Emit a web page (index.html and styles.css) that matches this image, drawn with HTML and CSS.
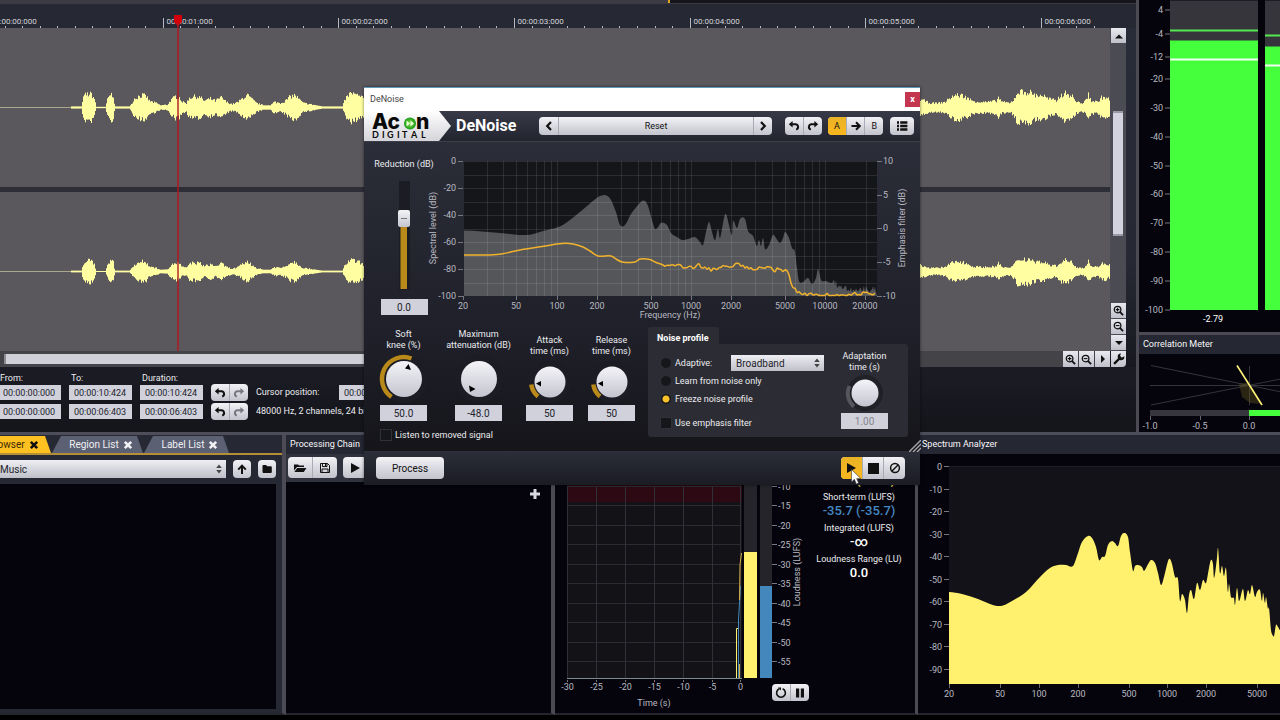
FILE: index.html
```html
<!DOCTYPE html>
<html lang="en">
<head>
<meta charset="utf-8">
<title>Audio Editor</title>
<link rel="stylesheet" href="styles.css">
</head>
<body>
<svg class="defs" aria-hidden="true">
  <symbol id="undo" viewBox="0 0 12 12"><path d="M3 4.2H6.8A2.8 2.8 0 0 1 8.2 9.6" fill="none" stroke="currentColor" stroke-width="2"/><path d="M.8 4.2 4.6 1V7.4Z"/></symbol>
  <symbol id="redo" viewBox="0 0 12 12"><path d="M9 4.2H5.2A2.8 2.8 0 0 0 3.8 9.6" fill="none" stroke="currentColor" stroke-width="2"/><path d="M11.2 4.2 7.4 1V7.4Z"/></symbol>
  <symbol id="zoomin" viewBox="0 0 12 12"><circle cx="5" cy="5" r="3.6" fill="none" stroke="currentColor" stroke-width="1.4"/><path d="M7.8 7.8 11 11" stroke="currentColor" stroke-width="2"/><path d="M3 5H7M5 3V7" stroke="currentColor" stroke-width="1.2"/></symbol>
  <symbol id="zoomout" viewBox="0 0 12 12"><circle cx="5" cy="5" r="3.6" fill="none" stroke="currentColor" stroke-width="1.4"/><path d="M7.8 7.8 11 11" stroke="currentColor" stroke-width="2"/><path d="M3 5H7" stroke="currentColor" stroke-width="1.2"/></symbol>
  <symbol id="up" viewBox="0 0 12 12"><path d="M2 8.5 6 4.5 10 8.5Z"/></symbol>
  <symbol id="down" viewBox="0 0 12 12"><path d="M2 4 6 8 10 4Z"/></symbol>
  <symbol id="right" viewBox="0 0 12 12"><path d="M4 2V10L8 6Z"/></symbol>
  <symbol id="play" viewBox="0 0 12 12"><path d="M2 1V11L11 6Z"/></symbol>
  <symbol id="wrench" viewBox="0 0 12 12"><path d="M1.8 10.2 7 5" stroke="currentColor" stroke-width="2.4" stroke-linecap="round"/><path d="M11.2 3.2A3.3 3.3 0 1 1 8 .6L7 2.8 8.8 4.8Z"/></symbol>
  <symbol id="close" viewBox="0 0 10 10"><path d="M1.8 1.8 8.2 8.2M8.2 1.8 1.8 8.2" stroke="currentColor" stroke-width="2.6"/></symbol>
  <symbol id="arrowup" viewBox="0 0 12 12"><path d="M6 11V3M2.2 6.6 6 2.6 9.8 6.6" fill="none" stroke="currentColor" stroke-width="2"/></symbol>
  <symbol id="arrowright" viewBox="0 0 12 12"><path d="M1.5 6H9M6 2.2 9.8 6 6 9.8" fill="none" stroke="currentColor" stroke-width="2"/></symbol>
  <symbol id="folder" viewBox="0 0 12 12"><path d="M1.5 3A1 1 0 0 1 2.5 2H5L6.2 3.2H9.8A1 1 0 0 1 10.8 4.2V9A1 1 0 0 1 9.8 10H2.5A1 1 0 0 1 1.5 9Z"/></symbol>
  <symbol id="open" viewBox="0 0 14 12"><path d="M1 8.6V2.4H5L6.2 3.6H11V5H4Z"/><path d="M1.4 10 4.2 6H13.4L10.8 10Z"/></symbol>
  <symbol id="save" viewBox="0 0 12 12"><path d="M1.5 1.5H8.5L10.5 3.5V10.5H1.5Z" fill="none" stroke="currentColor"/><path d="M3.5 1.5V4.5H8V1.5M3 10.5V7H9V10.5" fill="none" stroke="currentColor"/><path d="M6 2H7.2V4H6Z"/></symbol>
  <symbol id="prev" viewBox="0 0 12 12"><path d="M8 2 4.2 6 8 10" fill="none" stroke="currentColor" stroke-width="2.2"/></symbol>
  <symbol id="next" viewBox="0 0 12 12"><path d="M4 2 7.8 6 4 10" fill="none" stroke="currentColor" stroke-width="2.2"/></symbol>
  <symbol id="list" viewBox="0 0 12 12"><path d="M1 2.5H3M4.2 2.5H11.4M1 6H3M4.2 6H11.4M1 9.5H3M4.2 9.5H11.4" stroke="currentColor" stroke-width="2.4"/></symbol>
  <symbol id="stop" viewBox="0 0 12 12"><path d="M0 0H12V12H0Z"/></symbol>
  <symbol id="bypass" viewBox="0 0 12 12"><circle cx="6" cy="6" r="4.4" fill="none" stroke="currentColor" stroke-width="1.5"/><path d="M3 9 9 3" stroke="currentColor" stroke-width="1.5"/></symbol>
  <symbol id="loop" viewBox="0 0 12 12"><path d="M4.4 1.8A4.4 4.4 0 1 0 7.6 1.8" fill="none" stroke="currentColor" stroke-width="1.6"/><path d="M3 .4H6V3.4Z"/></symbol>
  <symbol id="pause" viewBox="0 0 12 12"><path d="M2 1.5H5.2V10.5H2ZM6.8 1.5H10V10.5H6.8Z"/></symbol>
  <symbol id="spin" viewBox="0 0 8 12"><path d="M1.2 5 4 1.6 6.8 5ZM1.2 7 4 10.4 6.8 7Z"/></symbol>
</svg>

<div class="app">
  <div class="upper">
    <main class="editor">
      <div class="strip"><span class="strip-left"></span></div>
      <svg class="ruler" id="ruler" height="24"></svg>
      <div class="tracks">
        <div class="lanes">
          <svg class="lane" id="lane1" viewBox="0 28 1110 159" preserveAspectRatio="none"></svg>
          <svg class="lane" id="lane2" viewBox="0 28 1110 159" preserveAspectRatio="none"></svg>
          <svg class="playhead" width="10" height="336" viewBox="0 0 10 336" aria-hidden="true"><path d="M1 0H9V7L5 11 1 7Z" fill="#d3000c"/><path d="M5 8V336" stroke="#b4161f" stroke-width="1.4"/></svg>
        </div>
        <div class="vscroll">
          <button class="sq" aria-label="Scroll up"><svg class="i12"><use href="#up"/></svg></button>
          <div class="vtrack"><span class="vthumb"></span></div>
          <button class="sq" aria-label="Zoom in vertically"><svg class="i11"><use href="#zoomin"/></svg></button>
          <button class="sq" aria-label="Zoom out vertically"><svg class="i11"><use href="#zoomout"/></svg></button>
          <button class="sq" aria-label="Scroll down"><svg class="i12"><use href="#down"/></svg></button>
        </div>
        <div class="hscroll">
          <span class="hthumb"></span>
          <button class="sq" aria-label="Zoom in"><svg class="i11"><use href="#zoomin"/></svg></button>
          <button class="sq" aria-label="Zoom out"><svg class="i11"><use href="#zoomout"/></svg></button>
          <button class="sq" aria-label="Scroll right"><svg class="i12"><use href="#right"/></svg></button>
        </div>
        <button class="sq corner" aria-label="Settings"><svg class="i12"><use href="#wrench"/></svg></button>
      </div>
      <div class="transport">
        <label for="from1">From:</label><label for="to1">To:</label><label for="dur1">Duration:</label><span></span><span></span><span></span>
        <input class="field time" id="from1" value="00:00:00:000">
        <input class="field time" id="to1" value="00:00:10:424">
        <input class="field time" id="dur1" value="00:00:10:424">
        <div class="group small"><button aria-label="Undo"><svg class="i12"><use href="#undo"/></svg></button><button class="dim" aria-label="Redo"><svg class="i12"><use href="#redo"/></svg></button></div>
        <label for="cursor">Cursor position:</label>
        <input class="field time" id="cursor" value="00:00:01:084">
        <input class="field time" aria-label="View from" value="00:00:00:000">
        <input class="field time" aria-label="View to" value="00:00:06:403">
        <input class="field time" aria-label="View duration" value="00:00:06:403">
        <div class="group small"><button aria-label="Undo view"><svg class="i12"><use href="#undo"/></svg></button><button class="dim" aria-label="Redo view"><svg class="i12"><use href="#redo"/></svg></button></div>
        <span class="format">48000 Hz, 2 channels, 24 bits</span>
      </div>
    </main>
    <aside class="side">
      <svg class="level" id="level" width="141" height="331" viewBox="1139 0 141 331"></svg>
      <h2 class="head side-head">Correlation Meter</h2>
      <svg class="corr" id="corr" width="141" height="78" viewBox="1139 353 141 78"></svg>
    </aside>
  </div>

  <div class="lower">
    <section class="panel browser">
      <div class="tabs">
        <button class="tab active">Browser<svg class="i10"><use href="#close"/></svg></button>
        <button class="tab region">Region List<svg class="i10"><use href="#close"/></svg></button>
        <button class="tab labels">Label List<svg class="i10"><use href="#close"/></svg></button>
      </div>
      <div class="path">
        <span class="pick grow"><select aria-label="Folder"><option>Music</option></select><svg class="spin"><use href="#spin"/></svg></span>
        <button class="btn icon" aria-label="Parent folder"><svg class="i12"><use href="#arrowup"/></svg></button>
        <button class="btn icon" aria-label="Choose folder"><svg class="i12"><use href="#folder"/></svg></button>
      </div>
      <div class="files"></div>
    </section>
    <section class="panel chain">
      <h2 class="head">Processing Chain</h2>
      <div class="tools">
        <div class="group wide"><button aria-label="Open"><svg class="i14"><use href="#open"/></svg></button><button aria-label="Save"><svg class="i12"><use href="#save"/></svg></button></div>
        <button class="btn icon wide-icon" aria-label="Play chain"><svg class="i12"><use href="#play"/></svg></button>
      </div>
      <div class="slots"><button class="add" aria-label="Add processor"><svg width="10" height="10" viewBox="0 0 10 10"><path d="M5 0V10M0 5H10" stroke="#d9d9e0" stroke-width="3"/></svg></button></div>
    </section>
    <section class="panel loudness">
      <div class="loud-chart">
        <svg id="loud" width="250" height="225" viewBox="555 455 250 225"></svg>
        <div class="loud-foot">
          <svg id="loudaxis" width="217" height="33" viewBox="555 680 217 33"></svg>
          <div class="group small"><button aria-label="Reset meter"><svg class="i12"><use href="#loop"/></svg></button><button aria-label="Pause meter"><svg class="i12"><use href="#pause"/></svg></button></div>
        </div>
      </div>
      <dl class="readouts">
        <dt>Momentary (LUFS)</dt><dd class="yellow">-26.9 (-26.9)</dd>
        <dt>Short-term (LUFS)</dt><dd class="blue">-35.7 (-35.7)</dd>
        <dt>Integrated (LUFS)</dt><dd>-∞</dd>
        <dt>Loudness Range (LU)</dt><dd>0.0</dd>
      </dl>
    </section>
    <section class="panel spectrum">
      <h2 class="head">Spectrum Analyzer</h2>
      <svg id="spec" width="362" height="259" viewBox="918 454 362 259"></svg>
    </section>
  </div>

  <div class="dialog" role="dialog" aria-label="DeNoise">
    <div class="titlebar"><span>DeNoise</span><button class="x" aria-label="Close">x</button></div>
    <header class="bar">
      <svg class="logo" width="87" height="30" viewBox="0 0 87 30" role="img" aria-label="Acon Digital">
        <defs><linearGradient id="lg" x2="0" y2="1"><stop offset="0" stop-color="#fff"/><stop offset="1" stop-color="#d4d4da"/></linearGradient><radialGradient id="gg"><stop offset="0" stop-color="#8ee04c"/><stop offset="1" stop-color="#159a16"/></radialGradient></defs>
        <path d="M0 0H75L87 15 75 30H0Z" fill="url(#lg)"/>
        <text class="acon" x="8" y="18">Ac</text><text class="acon" x="52" y="18">n</text>
        <circle cx="46" cy="12.500" r="6" fill="url(#gg)"/><path d="M42.500 9.500V15.500L46 12.500ZM46.500 9.500V15.500L50 12.500Z" fill="#e8ffd8"/>
        <text class="digital" x="8 18 23 33 38 47 57" y="27">DIGITAL</text>
      </svg>
      <h1>DeNoise</h1>
      <div class="preset"><button aria-label="Previous preset"><svg class="i12"><use href="#prev"/></svg></button><button class="name">Reset</button><button aria-label="Next preset"><svg class="i12"><use href="#next"/></svg></button></div>
      <div class="group"><button aria-label="Undo"><svg class="i12"><use href="#undo"/></svg></button><button aria-label="Redo"><svg class="i12"><use href="#redo"/></svg></button></div>
      <div class="group ab"><button class="on">A</button><button aria-label="Copy A to B"><svg class="i12"><use href="#arrowright"/></svg></button><button>B</button></div>
      <button class="btn menu" aria-label="Menu"><svg class="i12"><use href="#list"/></svg></button>
    </header>
    <div class="content">
      <div class="row1">
        <div class="reduction">
          <label for="red">Reduction (dB)</label>
          <svg width="20" height="128" viewBox="394 171 20 128" aria-hidden="true">
            <path d="M399 181H410V290H399Z" fill="#1b1c24"/><path d="M400.500 218H407V289H400.500Z" fill="#b98a19"/>
            <rect x="398" y="210" width="12" height="17" rx="2" fill="url(#face)"/><path d="M401 218.500H407" stroke="#777"/>
          </svg>
          <input class="field num" id="red" value="0.0">
        </div>
        <svg id="noise" width="492" height="184" viewBox="428 142 492 184"></svg>
      </div>
      <div class="row2">
        <div class="left">
          <div class="knobs">
            <div class="knob"><label for="k1">Soft<br>knee (%)</label>
              <svg width="54" height="52" viewBox="-27 -26 54 52" aria-hidden="true"><circle r="24" fill="#1b1c24"/><path d="M-12.500 17.900A21.800 21.800 0 0 1 7.500 -20.500" fill="none" stroke="#b98a19" stroke-width="4.500"/><circle r="18" fill="url(#face)"/><path d="M4.500-15 7-9 1-10.500Z"/></svg>
              <input class="field num" id="k1" value="50.0"></div>
            <div class="knob k2"><label for="k2">Maximum<br>attenuation (dB)</label>
              <svg width="54" height="52" viewBox="-27 -26 54 52" aria-hidden="true"><circle r="24" fill="#1b1c24"/><circle r="18" fill="url(#face)"/><path d="M-10 6.500-3.500 10-9 13Z"/></svg>
              <input class="field num" id="k2" value="-48.0"></div>
            <div class="knob k3"><label for="k3">Attack<br>time (ms)</label>
              <svg width="48" height="46" viewBox="-24 -23 48 46" aria-hidden="true"><circle r="21" fill="#1b1c24"/><path d="M-12 14.500A18.800 18.800 0 0 1-18.700 2.500" fill="none" stroke="#b98a19" stroke-width="4.500"/><circle r="15.500" fill="url(#face)"/><path d="M-14 1.500-9-1V4.500Z"/></svg>
              <input class="field num" id="k3" value="50"></div>
            <div class="knob k4"><label for="k4">Release<br>time (ms)</label>
              <svg width="48" height="46" viewBox="-24 -23 48 46" aria-hidden="true"><circle r="21" fill="#1b1c24"/><path d="M-12 14.500A18.800 18.800 0 0 1-18.700 2.500" fill="none" stroke="#b98a19" stroke-width="4.500"/><circle r="15.500" fill="url(#face)"/><path d="M-14 1.500-9-1V4.500Z"/></svg>
              <input class="field num" id="k4" value="50"></div>
          </div>
          <label class="check listen"><input type="checkbox"> Listen to removed signal</label>
        </div>
        <section class="profile">
          <h2>Noise profile</h2>
          <div class="profile-body">
            <div class="modes">
              <div class="mode"><label class="check"><input type="radio" name="mode"> Adaptive:</label>
                <span class="pick broad"><select aria-label="Adaptive mode"><option>Broadband</option></select><svg class="spin"><use href="#spin"/></svg></span></div>
              <label class="check mode"><input type="radio" name="mode"> Learn from noise only</label>
              <label class="check mode"><input type="radio" name="mode" checked> Freeze noise profile</label>
              <label class="check mode emph"><input type="checkbox"> Use emphasis filter</label>
            </div>
            <div class="knob adapt"><label for="k5">Adaptation<br>time (s)</label>
              <svg width="40" height="40" viewBox="-20 -20 40 40" aria-hidden="true"><circle r="18" fill="#202127"/><path d="M-11 13.500A17 17 0 0 1-15.500-7" fill="none" stroke="#56565c" stroke-width="4"/><circle r="13.500" fill="url(#face)"/></svg>
              <input class="field num" id="k5" value="1.00" disabled></div>
          </div>
        </section>
      </div>
    </div>
    <footer class="foot">
      <button class="btn process">Process</button>
      <div class="group play"><button class="on" aria-label="Play"><svg class="i12"><use href="#play"/></svg></button><button aria-label="Stop"><svg class="i11"><use href="#stop"/></svg></button><button aria-label="Bypass"><svg class="i12"><use href="#bypass"/></svg></button></div>
    </footer>
    <svg class="grip" width="12" height="12" viewBox="0 0 12 12" aria-hidden="true"><path d="M0 12 12 0M4 12 12 4M8 12 12 8" stroke="#a9a9ae" stroke-width="1.400"/></svg>
    <svg class="pointer" width="12" height="16" viewBox="0 0 12 16" aria-hidden="true"><path d="M.5.5V13L3.400 10.200 5.300 15 7.600 14 5.700 9.500H9.800Z" fill="#fff" stroke="#333" stroke-width=".600"/></svg>
  </div>
</div>
<svg class="defs" aria-hidden="true"><defs><linearGradient id="face" x2="0" y2="1"><stop offset="0" stop-color="#f4f4f8"/><stop offset="1" stop-color="#c3c4cf"/></linearGradient></defs></svg>
<script src="app.js"></script>
</body>
</html>
```

FILE: styles.css
```css
* { box-sizing: border-box; }
html, body { height: 100%; }
body {
  margin: 0;
  overflow: hidden;
  background: #000;
  color: #ececf0;
  font: 9px/11px Roboto, "Noto Sans", sans-serif;
}
button, input, select { font: inherit; margin: 0; }
button { border: 0; padding: 0; background: none; color: #111; display: flex; align-items: center; justify-content: center; }
h1, h2, dl, dd { margin: 0; }
svg { display: block; flex: none; }
.defs { position: absolute; width: 0; height: 0; }
.i10 { width: 10px; height: 10px; }
.i11 { width: 11px; height: 11px; }
.i12 { width: 12px; height: 12px; }
.i14 { width: 14px; height: 12px; }
use { fill: currentColor; }

.app { position: relative; height: 100vh; display: flex; flex-direction: column; }
.upper { flex: 1; min-height: 0; display: flex; }

/* editor */
.editor { flex: 1; min-width: 0; display: flex; flex-direction: column; background: linear-gradient(#292c39, #262934 60%, #17181f 86%, #15151a); }
.strip { height: 4px; background: #14141a; border-bottom: 1px solid #3a3a44; }
.strip-left { display: block; width: 59%; height: 3px; background: #3d3b46; border-right: 2px solid #e0a61c; }
.ruler { width: 100%; height: 24px; background: #262934; }
.tracks { flex: 1; min-height: 0; display: grid; grid-template: minmax(0, 1fr) 16px / minmax(0, 1fr) 16px; padding-right: 10px; }
.lanes { position: relative; display: flex; flex-direction: column; gap: 5px; min-height: 0; background: #2d2e37; }
.lane { flex: 1 1 0; min-height: 0; width: 100%; background: #5a575d; }
.playhead { position: absolute; left: 173px; top: -13px; }
.vscroll { display: flex; flex-direction: column; background: #4b4b54; padding-left: 1px; }
.vtrack { flex: 1; padding: 67px 3px 67px 2px; display: flex; }
.vthumb { flex: 1; background: #d2d3de; border: solid #9a9aa6; border-width: 2px 0; }
.hscroll { display: flex; align-items: center; gap: 1px; background: #444448; padding-left: 4px; }
.hthumb { width: 78%; height: 10px; margin-right: auto; background: #d0d1d8; border-left: 2px solid #8b8b92; }
.sq { width: 15px; height: 15px; flex: none; background: linear-gradient(#e9eaf0, #bfc0ca); margin-bottom: 1px; }
.hscroll .sq { width: 15px; margin-bottom: 0; height: 16px; }
.corner { width: 15px; height: 16px; margin-left: 1px; border-radius: 0 0 4px 0; }

.transport { height: 65px; padding-top: 4px; margin-left: -2px; display: grid; grid-template-columns: 63px 63px 63px 37px 75px 63px; grid-template-rows: 14px 15px 15px; column-gap: 8px; align-items: center; background: linear-gradient(#1b1c25, #14151a); align-content: start; white-space: nowrap; }
.transport > :nth-child(n+13) { margin-top: 4px; margin-bottom: -4px; }
.transport label { padding-left: 2px; }
.transport label[for="cursor"], .format { padding-left: 0; }
.transport .field { height: 15px; }
.field { border: 0; background: #d0d1db; color: #22232b; width: 47px; height: 16px; padding: 0; font-size: 10px; text-align: center; }
.transport .time { width: 100%; font-size: 9px; text-align: left; padding-left: 5px; }
.field:disabled { color: #85858f; }

.btn, .group, .preset { background: linear-gradient(#f2f2f6, #c2c3cc); border-radius: 4px; }
.group, .preset { display: flex; height: 18px; flex: none; }
.group button { flex: 1; }
.group button + button, .preset button + button { border-left: 1px solid #a9aab3; }
.group.small { height: 17px; width: 37px; }
.group.wide { width: 49px; height: 21px; }
.dim { color: #777881; }
.on { background: linear-gradient(#e9b326, #fbb71d); border-radius: 4px 0 0 4px; }

/* meters */
.side { width: 144px; border-left: 3px solid #4b4a55; background: #05040c; display: flex; flex-direction: column; }
.level { flex: 1; min-height: 0; }
.head { height: 19px; padding-left: 4px; display: flex; align-items: center; background: #252733; font-size: 9px; font-weight: 400; color: #f8f8fa; white-space: nowrap; }
.side-head { height: 22px; border-top: 3px solid #4b4a55; }
svg text { font: 9px Roboto, sans-serif; fill: #b9b9c1; }
#ruler text { font-size: 8px; fill: #d5d5da; }

/* lower docks */
.lower { height: 40vh; display: flex; border-top: 3px solid #4d4e59; padding-bottom: 7px; background: #000; }
.panel { background: #05040c; display: flex; flex-direction: column; border-right: 4px solid #4b4a55; border-bottom: 2px solid #25252e; margin-bottom: -2px; min-height: 0; overflow: hidden; }
.browser { width: 286px; background: #262834; }
.tabs { display: flex; height: 20px; padding-top: 1px; border-bottom: 2px solid #b58f38; }
.tab { color: #f0f0f3; background: #5c6073; font-size: 10px; height: 17px; gap: 4px; clip-path: polygon(9px 0, calc(100% - 6px) 0, 100% 100%, 0 100%); }
.tab.active { width: 63px; margin-left: -12px; margin-right: 1px; justify-content: flex-start; background: #ffc022; color: #3a2a00; clip-path: polygon(0 0, 57px 0, 100% 100%, 0 100%); }
.tab.active svg { color: #111; }
.region { width: 91px; padding-left: 7px; margin-right: 1px; }
.labels { width: 85px; padding-left: 7px; }
.path { display: flex; gap: 7px; padding: 5px 6px 6px 0; }
.btn.icon { width: 18px; height: 18px; }
.btn.wide-icon { width: 24px; height: 21px; }
.pick { position: relative; display: flex; height: 18px; }
.grow { flex: 1; }
.pick select { appearance: none; border: 0; border-radius: 0; width: 100%; background: linear-gradient(#eeeef3, #bfc0c9); color: #22232b; font-size: 10px; padding: 0 16px 0 5px; }
.grow select { padding-left: 0; }
.spin { position: absolute; right: 3px; top: 50%; width: 8px; height: 12px; margin-top: -6px; color: #444; }
.files { flex: 1; background: #05040c; margin: 0 6px 4px 0; }
.chain { width: 269px; }
.tools { display: flex; gap: 6px; padding: 3px 2px 4px; background: #30323e; }
.slots { flex: 1; padding: 7px 11px; display: flex; justify-content: flex-end; align-items: flex-start; }
.loudness { width: 363px; flex-direction: row; padding-top: 20px; border-right-width: 3px; }
.loud-foot { display: flex; }
.loud-foot .group { margin-top: 4px; }
.readouts { flex: 1; padding: 5px 6px 0 0; text-align: center; white-space: nowrap; }
.readouts dt { line-height: 13px; }
.readouts dd { font-size: 13px; font-weight: 500; line-height: 14px; margin-bottom: 4px; color: #fff; }
.readouts .blue { color: #4788c2; }
.readouts .yellow { color: #fff06d; }
.spectrum { flex: 1; min-width: 0; border-right: 0; }

/* plug-in window */
.dialog { position: absolute; left: 364px; top: 87px; width: 556px; background: #1b1c23; box-shadow: 0 0 3px #0008; }
.titlebar { height: 24px; background: #fff; border-top: 1px solid #5d99b8; padding-left: 6px; color: #444; display: flex; justify-content: space-between; align-items: center; }
.x { width: 15px; height: 15px; background: #c4354f; color: #fff; font-weight: 700; }
.bar { height: 31px; display: flex; align-items: center; background: linear-gradient(#383a48, #22242e); border-bottom: 1px solid #3c3e4a; padding-right: 6px; }
.logo { align-self: flex-start; }
.logo .acon { font: 800 21px Inter, sans-serif; fill: #0a0a0a; }
.logo .digital { font: 700 9px Lato, sans-serif; fill: #0a0a0a; }
.bar h1 { font-size: 16px; line-height: 18px; margin-left: 5px; width: 83px; color: #fff; }
.preset { flex: 1; margin-right: 13px; }
.preset button { width: 19px; }
.preset .name { flex: 1; }
.bar .group { width: 37px; margin-right: 6px; }
.bar .ab { width: 55px; margin-right: 7px; }
.menu { width: 24px; height: 18px; }
.content { background: linear-gradient(#2b2d38, #1e1f28 65%, #15151a); }
.row1 { display: flex; padding-left: 16px; }
.reduction { width: 48px; display: flex; flex-direction: column; align-items: center; padding-top: 16px; white-space: nowrap; }
.reduction label { line-height: 13px; }
.row2 { display: flex; justify-content: space-between; padding: 0 12px 0 16px; height: 125px; }
.knobs { display: flex; align-items: flex-end; height: 95px; }
.knob { width: 47px; display: flex; flex-direction: column; align-items: center; text-align: center; white-space: nowrap; }
.knob svg { margin-top: 2px; }
.k2 { margin-left: 28px; }
.k3 { margin-left: 24px; }
.k4 { margin-left: 15px; }
.check { display: flex; align-items: center; gap: 3px; white-space: nowrap; }
.check input { appearance: none; width: 12px; height: 12px; background: #16171b; border: 1px solid #303138; }
.check input[type="radio"] { border-radius: 50%; }
.check input[type="radio"]:checked { background: radial-gradient(circle, #fbc12b 0 3px, #16171b 4px); }
.listen { margin-top: 8px; }
.profile { width: 260px; padding-top: 1px; }
.profile h2 { width: 71px; height: 17px; padding: 5px 0 0 9px; font-size: 9px; line-height: 12px; background: #2c2d34; border-radius: 3px 3px 0 0; color: #fff; white-space: nowrap; }
.profile-body { display: flex; justify-content: space-between; background: #2c2d34; border-radius: 0 3px 3px 3px; padding: 0 20px 5px 12px; }
.modes { padding-top: 10px; width: 164px; }
.mode { height: 18px; display: flex; align-items: center; justify-content: space-between; }
label.mode { justify-content: flex-start; }
.emph { margin-top: 6px; }
.broad { width: 93px; height: 16px; }
.adapt { padding-top: 7px; }
.adapt svg { margin-top: 0; }
.foot { height: 34px; display: flex; justify-content: space-between; align-items: center; padding: 0 15px 0 12px; background: linear-gradient(#2c2e39, #1a1b23); }
.process { width: 68px; height: 22px; font-size: 10px; }
.play { width: 64px; height: 22px; }
.play button { border-left: 0; }
.grip { position: absolute; right: -1px; bottom: 33px; }
.pointer { position: absolute; right: 57px; bottom: 0; }
```

FILE: app.js
```js
const byId = id => document.getElementById(id);
let seed = 7;
const rnd = () => (seed = (seed * 16807) % 2147483647) / 2147483647;
const put = (id, markup) => { byId(id).innerHTML = markup; };
const text = (x, y, s, anchor = 'middle') => `<text x="${x}" y="${y}" text-anchor="${anchor}">${s}</text>`;
const line = (d, color) => `<path d="${d}" stroke="${color}" fill="none"/>`;
const rect = (x, y, w, h, fill) => `<rect x="${x}" y="${y}" width="${w}" height="${h}" fill="${fill}"/>`;
const pairs = s => s.trim().split(/\s+/).map(p => p.split(',').map(Number));

/* smooth curve through every point */
const smooth = s => {
  const p = pairs(s);
  let d = `${p[0]}`;
  for (let i = 0; i < p.length - 1; i++) {
    const a = p[i - 1] || p[i], b = p[i], c = p[i + 1], e = p[i + 2] || c;
    const w = c[0] - b[0];
    const sb = a === b ? 0 : (c[1] - a[1]) / (c[0] - a[0]);
    const sc = e === c ? 0 : (e[1] - b[1]) / (e[0] - b[0]);
    d += `C${(b[0] + w / 3).toFixed(1)} ${(b[1] + sb * w / 3).toFixed(1)} ${(c[0] - w / 3).toFixed(1)} ${(c[1] - sc * w / 3).toFixed(1)} ${c}`;
  }
  return d;
};

/* time ruler */
let ruler = '';
for (let i = 0; i < 66; i++) {
  const x = Math.round(-13 + i * 17.566) + 0.5;
  if (x > 1110) break;
  ruler += line(`M${x} ${i % 10 ? 22 : 14}V24`, '#b9b9c1');
  if (i % 10 === 0) ruler += text(x + 3, 20, `00:00:0${i / 10}:000`, 'start');
}
put('ruler', ruler);

/* waveform peaks: position, height */
const env = pairs(`0,.5 70,.5 71,1 81,1 82,6 84,11 87,12 91,12 94,8 95,4 96,.6 105,.6 107,7 110,12 113,11 114,4 115,1 129,1
 131,3 134,8 138,10 142,11 146,10 149,6 152,5 156,4 160,2 167,2.5 170,6 175,10 179,9 182,5 186,4 189,9 195,10 200,9 204,6
 210,8 215,6 221,9 226,5 232,3 238,5 243,9 247,11 252,7 256,4 263,2 270,2 274,5 280,4 285,6 290,10 295,11 299,7 303,4 310,3
 316,2 322,1 342,1 345,8 349,12 352,13 356,11 360,10 364,7 366,1 900,1 918,8 924,6 930,4 938,4 945,5 950,9 955,11 961,11 966,9
 972,6 980,5 988,5 996,6 998,9 1002,5 1010,4 1014,8 1017,14 1023,14 1029,14 1035,11 1042,11 1048,8 1056,6 1060,11 1066,13
 1072,10 1076,5 1083,4 1086,7 1088,12 1091,6 1097,5 1101,9 1105,9 1110,7`);
const at = (pts, x) => {
  const i = pts.findIndex(p => p[0] > x);
  if (i < 1) return pts[pts.length - 1][1];
  const [a, b] = [pts[i - 1], pts[i]];
  return a[1] + (b[1] - a[1]) * (x - a[0]) / (b[0] - a[0]);
};
const wave = scale => {
  let d = '';
  for (let x = 71; x < 1110; x++) {
    const a = at(env, x) * scale;
    const n = a > 2 ? 0.5 : 0;
    d += `M${x + .5} ${(107.5 - a * (1.1 - n / 2 + n * rnd())).toFixed(1)}V${(107.5 + a * (1.1 - n / 2 + n * rnd())).toFixed(1)}`;
  }
  return line('M0 107.5H1110', '#a9a78c') + line(d, '#ffffa2');
};
put('lane1', wave(1));
put('lane2', wave(.8));

/* output level */
let lv = rect(1170, 0, 88, 309, '#37353c') + rect(1265, 0, 15, 309, '#37353c')
  + rect(1170, 40, 88, 269.5, '#45ff3c') + rect(1265, 46, 15, 263.5, '#45ff3c')
  + rect(1170, 29, 88, 2, '#55e850') + rect(1265, 34, 15, 2, '#55e850')
  + rect(1170, 58, 88, 2, '#f0fff0') + rect(1265, 64, 15, 2, '#f0fff0');
[[4, 9], [-4, 33], [-12, 56], [-20, 78], [-30, 107], [-40, 136], [-50, 165], [-60, 193], [-70, 222], [-80, 251], [-90, 280], [-100, 309]]
  .forEach(([v, y]) => { lv += text(1163, y + 3, v, 'end') + line(`M1165 ${y + .5}H1170`, '#77777f'); });
put('level', lv + '<text x="1213" y="321" text-anchor="middle" style="fill:#fff">-2.79</text>');

/* phase correlation */
put('corr', line('M1151 364.500 1348 404.500M1151 404 1348 364.500M1150 384.500H1280M1249.500 365V404', '#34343b')
  + '<path d="M1239 383 1249 381 1262 403 1250 402 1242 396Z" fill="#6f6020" opacity=".35"/>'
  + '<path d="M1237 364.500 1262 404" stroke="#fff27a" stroke-width="1.600"/>'
  + rect(1150, 409, 100, 6, '#37363c') + rect(1249, 409, 31, 6, '#45ff3c')
  + line('M1150.500 415V419M1200.500 415V419M1249.500 415V419', '#66666e')
  + text(1150, 428, '-1.0') + text(1200, 428, '-0.5') + text(1249, 428, '0.0'));

/* loudness history */
let ld = rect(567, 455, 175, 223, '#131217') + rect(567, 455, 175, 47, '#2d0a13')
  + rect(744, 455, 13, 223, '#25242b') + rect(760, 455, 12, 223, '#25242b')
  + rect(744, 552, 13, 126, '#fff16e') + rect(760, 586, 12, 92, '#4487bd');
for (let i = 0; i < 10; i++) {
  const y = Math.round(486 + i * 19.45) + .5;
  ld += line(`M567 ${y}H741`, '#2b2b31') + line(`M772 ${y}H777`, '#77777f') + text(778, y + 3, -10 - i * 5, 'start');
}
let la = '';
for (let i = 0; i < 7; i++) {
  const x = Math.round(567 + i * 28.9) + .5;
  ld += line(`M${x} 486V678`, '#303037');
  la += line(`M${x} 680V682`, '#77777f') + text(x, 690, -30 + i * 5);
}
ld += line('M567 678.500H742', '#7a8c8d') + line('M736.500 678V628.500H738.500V663', '#fff16e')
  + line('M738.500 678V620L740.500 586', '#4487bd') + line('M739.500 678V664M739.500 600 740 565 741.500 553', '#d9b048')
  + '<text transform="translate(800 572) rotate(-90)" text-anchor="middle">Loudness (LUFS)</text>';
put('loud', ld);
put('loudaxis', la + text(654, 706, 'Time (s)'));

/* spectrum analyzer */
const spec = `949,592 962,594 978,599 990,604 997,606 1003,605.5 1012,601 1026,592 1040,577 1050,568 1058,565 1066,565 1073,566
 1077,556 1082,542 1088,536 1092,538 1096,547 1099,560 1102,557 1105,556 1108,545 1112,541 1115,543 1118,546 1121,536 1124,533
 1128,537 1130,552 1133,571 1135,566 1138,565 1142,567 1144,571 1147,566 1151,560 1155,563 1158,573 1161,585 1164,577 1168,561
 1170,559 1172,564 1175,577 1178,579 1180,601 1182,594 1185,600 1187,613 1189,595 1191,590 1194,599 1197,583 1200,590 1203,580
 1206,583 1209,568 1211,560 1213,564 1214,578 1217,558 1218,548 1220,573 1222,566 1224,576 1226,568 1228,592 1229,584 1231,597
 1234,598 1235,605 1237,588 1239,601 1243,589 1245,601 1248,590 1250,594 1252,585 1255,597 1257,592 1260,590 1262,601 1263,593
 1265,603 1266,597 1268,609 1269,608 1271,630 1272,634 1274,636 1276,625 1278,627 1280,630`;
let sp = rect(949, 466, 331, 218, '#131218') + line('M949 466.500H1280', '#1e1e24') + `<path d="M949 684L${smooth(spec)}L1280 684Z" fill="#fff16e"/>`;
for (let i = 0; i < 10; i++) {
  const y = Math.round(466 + i * 22.55) + .5;
  sp += text(942, y + 3, -i * 10 || 0, 'end') + line(`M944 ${y}H949`, '#77777f');
}
[[20, 949], [50, 1000], [100, 1039], [200, 1078], [500, 1129], [1000, 1167], [2000, 1206], [5000, 1257]]
  .forEach(([v, x]) => { sp += text(x, 697, v) + line(`M${x + .5} 684V688`, '#66666e'); });
put('spec', sp);

/* noise profile chart */
let area = `464,230.5 500,233 527,235 545,230.500 561,226 575,216 598,197 602,195.500 605,195 608,196.500 611,200 616,212 620,225
 625,225 631,214 638,205 642,201 645,201 648,206 652,220 655,229 658,227 661,223 667,225 671,233 677,237 682,240 688,239 695,237
 700,242 703,245 706,232 709,222 712,232 715,240 718,229 720,238 724,218 726,214 729,225 732,235 733,221 737,228 740,219 745,219
 748,231 753,236 757,246 759,240 761,246 763,238 765,249 769,245 773,235 776,238 780,243 783,238 785,232 789,238 792,248 795,252
 797,268 799,281 803,282 808,278 812,284 816,278 818,269 821,280 826,281 832,283`;
for (let x = 834; x < 877; x++) area += ` ${x},${(283 + Math.min(6, (x - 834) / 3) + rnd() * 7 - 3).toFixed(1)}`;
let prof = '464,255 497,254.500 520,250 545,246 562,243.500 573,244 583,247 590,251 598,256 611,256 616,259 622,262 635,262 640,259 650,259.500 655,262 663,265';
const tail = pairs('663,265 672,265 678,264 684,267 693,268 698,264 702,267 712,270 718,269 722,266 733,266 738,263 743,266 750,269 757,268 770,268 775,271 779,268 782,271 786,269 789,274 792,286 796,291 801,294 825,295 845,295 865,293 877,295');
for (let x = 665; x < 877; x += 2) prof += ` ${x},${Math.min(295.5, at(tail, x) + rnd() * 3 - 1.500).toFixed(1)}`;
let nz = rect(464, 161, 413, 135, '#15161a') + `<path d="M464 296L${smooth(area)}L877 296Z" fill="#55565a"/>`;
let grid = '';
for (let dec = 10; dec <= 10000; dec *= 10) for (let m = 1; m < 10; m++) {
  const f = dec * m;
  if (f > 20 && f <= 20000) grid += `M${Math.round(464 + 134.2 * Math.log10(f / 20)) - .5} 161V296`;
}
for (let i = 0; i < 10; i++) grid += `M464 ${Math.round(161 + i * 13.5) + .5}H877`;
nz += `<path d="${grid}" stroke="#fff" stroke-opacity=".1"/>` + `<path d="M${smooth(prof)}" fill="none" stroke="#f0b22c" stroke-width="1.500"/>`;
for (let i = 0; i < 6; i++) nz += text(456, 164 + i * 27, -20 * i || 0, 'end') + line(`M458 ${161.5 + i * 27}H463`, '#77777f');
for (let i = 0; i < 5; i++) nz += text(883, Math.round(164 + i * 33.7), 10 - 5 * i, 'start') + line(`M877 ${Math.round(161 + i * 33.7) + .5}H882`, '#77777f');
[[20, 463], [50, 516], [100, 557], [200, 597], [500, 651], [1000, 691], [2000, 731], [5000, 785], [10000, 825], [20000, 865]]
  .forEach(([v, x]) => { nz += text(x, 309, v) + line(`M${x + .5} 296V300`, '#77777f'); });
nz += text(670, 318, 'Frequency (Hz)')
  + '<text transform="translate(436 228) rotate(-90)" text-anchor="middle">Spectral level (dB)</text>'
  + '<text transform="translate(905 228) rotate(-90)" text-anchor="middle">Emphasis filter (dB)</text>';
put('noise', nz);
```
